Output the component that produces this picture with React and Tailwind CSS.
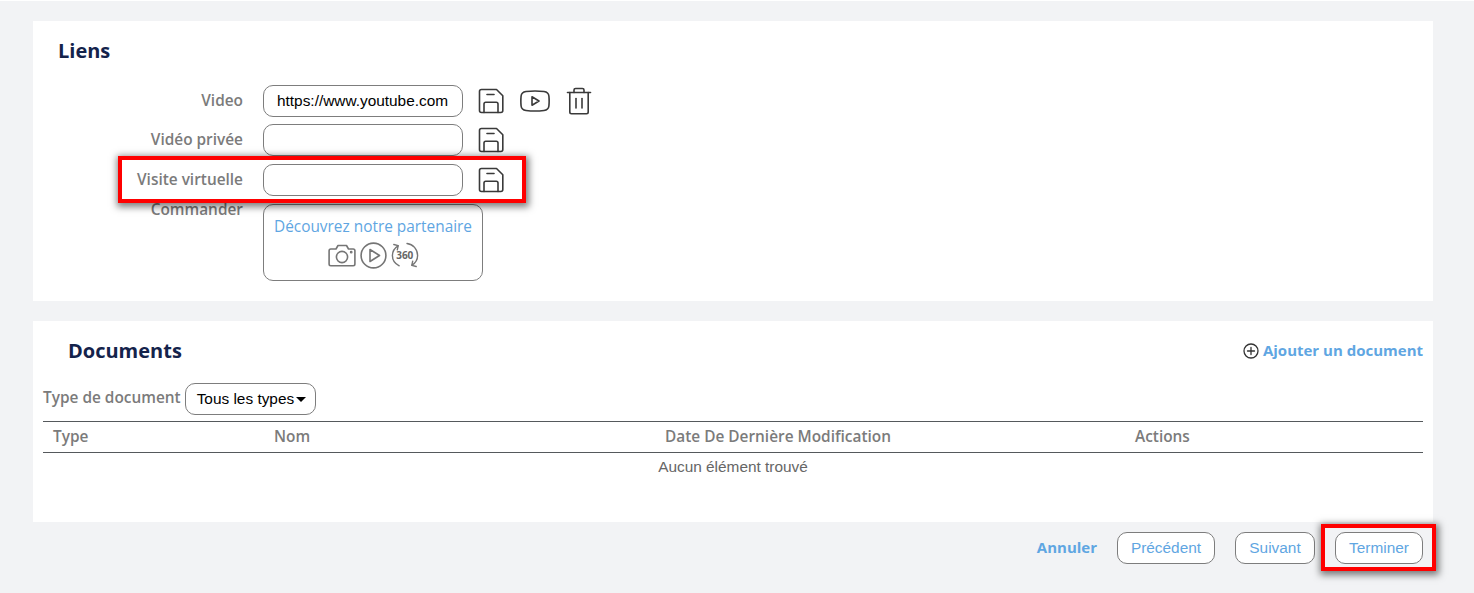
import React from 'react';

const openSans = "font-['Open_Sans',sans-serif]";
const arial = "font-['Liberation_Sans',Arial,sans-serif]";

function SaveIcon() {
  return (
    <svg width="26" height="26" viewBox="0 0 26 26" fill="none" stroke="#3a3a3a" strokeWidth="1.6" strokeLinejoin="round" strokeLinecap="round">
      <path d="M3.5 1.5H18.5L24.8 7.8V22.5C24.8 23.7 24 24.5 22.8 24.5H3.5C2.3 24.5 1.5 23.7 1.5 22.5V3.5C1.5 2.3 2.3 1.5 3.5 1.5Z" />
      <path d="M6 24.5V16C6 15 6.7 14.3 7.7 14.3H18.3C19.3 14.3 20 15 20 16V24.5" />
      <path d="M9 6.5H16" />
    </svg>
  );
}

function VideoIcon() {
  return (
    <svg width="30" height="22" viewBox="0 0 30 22" fill="none" stroke="#3a3a3a" strokeWidth="1.6" strokeLinejoin="round">
      <path d="M6 1.5C11 0.9 19 0.9 24 1.5C27 1.9 28.6 3.2 28.9 6C29.2 9 29.2 13 28.9 16C28.6 18.8 27 20.1 24 20.5C19 21.1 11 21.1 6 20.5C3 20.1 1.4 18.8 1.1 16C0.8 13 0.8 9 1.1 6C1.4 3.2 3 1.9 6 1.5Z" />
      <path d="M12 6.8L19 11L12 15.2Z" />
    </svg>
  );
}

function TrashIcon() {
  return (
    <svg width="26" height="28" viewBox="0 0 26 28" fill="none" stroke="#3a3a3a" strokeWidth="1.6" strokeLinejoin="round" strokeLinecap="round">
      <path d="M1.5 5.5H24.5" />
      <path d="M8 5.5V3C8 2 8.7 1.5 9.6 1.5H16.4C17.3 1.5 18 2 18 3V5.5" />
      <path d="M3.8 5.5V25C3.8 26 4.5 26.7 5.5 26.7H20.5C21.5 26.7 22.2 26 22.2 25V5.5" />
      <path d="M10 11.5V21" />
      <path d="M16 11.5V21" />
    </svg>
  );
}

function CameraIcon() {
  return (
    <svg width="28" height="23" viewBox="0 0 28 23" fill="none" stroke="#757575" strokeWidth="1.6" strokeLinejoin="round">
      <path d="M2.8 5H8L10 1.5H18.5L20.5 5H25.2C26.2 5 26.9 5.7 26.9 6.7V20C26.9 21 26.2 21.7 25.2 21.7H2.8C1.8 21.7 1.1 21 1.1 20V6.7C1.1 5.7 1.8 5 2.8 5Z" />
      <circle cx="14" cy="13" r="5.6" />
      <circle cx="23.2" cy="8.2" r="0.6" fill="#757575" />
    </svg>
  );
}

function PlayCircleIcon() {
  return (
    <svg width="27" height="27" viewBox="0 0 27 27" fill="none" stroke="#757575" strokeWidth="1.6" strokeLinejoin="round">
      <circle cx="13.5" cy="13.5" r="12.4" />
      <path d="M10 7.5L19.5 13.5L10 19.5Z" />
    </svg>
  );
}

function Icon360() {
  return (
    <svg width="28" height="27" viewBox="0 0 28 27" fill="none" stroke="#757575" strokeWidth="1.4" strokeLinecap="round" strokeLinejoin="round">
      <path d="M7 3.8C3.6 6 1.4 9.4 1.4 13.5C1.4 18 4 21.8 8.2 23.8" />
      <path d="M2.8 2.5L7.2 3.6L6.3 7.8" />
      <path d="M16 1.5C22 2.2 26.6 7.2 26.6 13.5C26.6 17.6 24.4 21 21 23.2" />
      <path d="M25.2 24.5L20.8 23.4L21.7 19.2" />
      <text x="5.2" y="16.6" fontSize="10" fontWeight="700" fill="#666" stroke="none" fontFamily="'Open Sans',sans-serif">360</text>
    </svg>
  );
}

function LinkRow({ label, value, actions, className }) {
  return (
    <div className={`flex h-8 items-center ${className || ''}`}>
      <div className={`w-[210px] text-right text-[15.4px] font-semibold text-[#7b7b7b] ${openSans}`}>{label}</div>
      <input
        readOnly
        value={value || ''}
        className={`ml-5 h-8 w-[200px] rounded-[10px] border border-[#7d7d7d] bg-white px-[13px] text-[15.4px] text-black ${arial}`}
      />
      <div className="ml-[15px] flex items-center gap-[16px]">{actions}</div>
    </div>
  );
}

function FooterButton({ children, className }) {
  return (
    <button className={`h-8 rounded-[10px] border border-[#7d7d7d] bg-white text-[15.4px] text-[#5fa6e2] ${arial} ${className}`}>
      {children}
    </button>
  );
}

function Highlight({ className }) {
  return <div className={`pointer-events-none absolute border-[4px] border-[#ff0000] shadow-[1px_2px_7px_2px_rgba(0,0,0,0.5)] ${className}`} />;
}

export default function App() {
  const headers = [
    { name: 'Type', cls: 'w-[231px] pl-[10px]' },
    { name: 'Nom', cls: 'w-[391px]' },
    { name: 'Date De Dernière Modification', cls: 'w-[470px]' },
    { name: 'Actions', cls: '' },
  ];

  return (
    <div className="relative h-[593px] w-[1474px] overflow-hidden bg-[#f2f3f5]">
      <div className="h-px bg-white" />

      {/* Liens */}
      <section className="mt-5 ml-[33px] h-[280px] w-[1400px] bg-white pt-[16px]">
        <h2 className={`ml-[25px] text-[20px] leading-[28px] font-bold text-[#14234b] ${openSans}`}>Liens</h2>
        <div className="mt-[20px]">
          <LinkRow
            label="Video"
            value="https://www.youtube.com"
            actions={
              <>
                <SaveIcon />
                <VideoIcon />
                <TrashIcon />
              </>
            }
          />
          <LinkRow label="Vidéo privée" className="mt-[7px]" actions={<SaveIcon />} />
          <LinkRow label="Visite virtuelle" className="mt-2" actions={<SaveIcon />} />
          <div className="mt-2 flex items-start">
            <div className={`w-[210px] text-right text-[15.4px] leading-[12px] font-semibold text-[#7b7b7b] ${openSans}`}>Commander</div>
            <div className="ml-5 flex h-[77px] w-[220px] flex-col items-center rounded-[10px] border border-[#7d7d7d] pt-[11px]">
              <span className={`text-[15.4px] leading-[22px] text-[#5fa6e2] ${openSans}`}>Découvrez notre partenaire</span>
              <div className="mt-[4px] flex items-center gap-[4px]">
                <CameraIcon />
                <PlayCircleIcon />
                <Icon360 />
              </div>
            </div>
          </div>
        </div>
      </section>

      {/* Documents */}
      <section className="mt-5 ml-[33px] h-[201px] w-[1400px] bg-white px-[10px] pt-[16px]">
        <div className="flex h-7 items-center justify-between">
          <h2 className={`ml-[25px] text-[20px] font-bold text-[#14234b] ${openSans}`}>Documents</h2>
          <div className={`flex items-center gap-[4px] pb-px text-[15px] font-bold text-[#5fa6e2] ${openSans}`}>
            <svg width="16" height="16" viewBox="0 0 16 16" fill="none" stroke="#333" strokeWidth="1.3" strokeLinecap="round" className="mt-px">
              <circle cx="8" cy="8" r="7" />
              <path d="M8 4.5V11.5M4.5 8H11.5" />
            </svg>
            Ajouter un document
          </div>
        </div>

        <div className="mt-[18px] flex h-8 items-center">
          <span className={`pb-[2px] text-[15.4px] font-semibold text-[#7b7b7b] ${openSans}`}>Type de document</span>
          <div className={`ml-[4px] flex h-8 w-[131px] items-center rounded-[10px] border border-[#7d7d7d] pl-[11px] text-[15.4px] text-black ${arial}`}>
            Tous les types
            <span className="mt-[1px] ml-[2px] h-0 w-0 border-x-[5px] border-t-[5px] border-x-transparent border-t-black" />
          </div>
        </div>

        <div className={`mt-[6px] flex h-[32px] items-center border-y border-[#55595c] text-[15.4px] font-semibold text-[#7b7b7b] ${openSans}`}>
          {headers.map((h) => (
            <div key={h.name} className={h.cls}>{h.name}</div>
          ))}
        </div>
        <div className={`pt-[6px] text-center text-[15.4px] leading-[16px] text-[#666666] ${arial}`}>Aucun élément trouvé</div>
      </section>

      {/* Footer */}
      <div className="mt-[10px] flex w-[1423px] items-center justify-end">
        <span className={`mr-5 pb-[2px] text-[15px] font-bold text-[#5fa6e2] ${openSans}`}>Annuler</span>
        <FooterButton className="w-[98px]">Précédent</FooterButton>
        <FooterButton className="ml-5 w-20">Suivant</FooterButton>
        <FooterButton className="ml-5 w-[88px]">Terminer</FooterButton>
      </div>

      <Highlight className="top-[156px] left-[118px] h-[47px] w-[408px]" />
      <Highlight className="top-[524px] left-[1321px] h-[47px] w-[115px]" />
    </div>
  );
}
